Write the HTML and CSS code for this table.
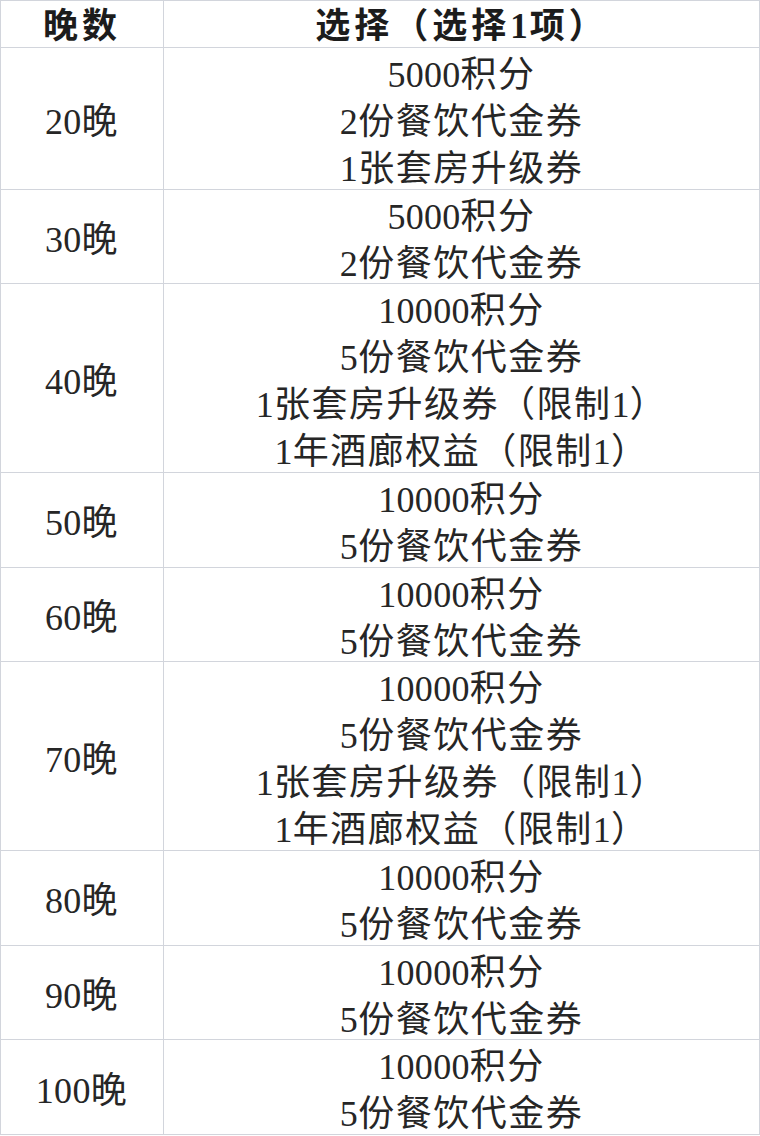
FILE: index.html
```html
<!DOCTYPE html>
<html lang="zh-CN">
<head>
<meta charset="utf-8">
<link rel="stylesheet" href="styles.css">
</head>
<body>
<table class="tbl">
  <thead>
    <tr><th class="c-night"><div class="cell">晚数</div></th><th class="c-opt"><div class="cell">选择（选择<span class="num">1</span>项）</div></th></tr>
  </thead>
  <tbody>
    <tr><td><div class="cell"><span class="num">20</span>晚</div></td><td><div class="cell"><span class="num">5000</span>积分<br><span class="num">2</span>份餐饮代金券<br><span class="num">1</span>张套房升级券</div></td></tr>
    <tr><td><div class="cell"><span class="num">30</span>晚</div></td><td><div class="cell"><span class="num">5000</span>积分<br><span class="num">2</span>份餐饮代金券</div></td></tr>
    <tr><td><div class="cell"><span class="num">40</span>晚</div></td><td><div class="cell"><span class="num">10000</span>积分<br><span class="num">5</span>份餐饮代金券<br><span class="num">1</span>张套房升级券（限制<span class="num">1</span>）<br><span class="num">1</span>年酒廊权益（限制<span class="num">1</span>）</div></td></tr>
    <tr><td><div class="cell"><span class="num">50</span>晚</div></td><td><div class="cell"><span class="num">10000</span>积分<br><span class="num">5</span>份餐饮代金券</div></td></tr>
    <tr><td><div class="cell"><span class="num">60</span>晚</div></td><td><div class="cell"><span class="num">10000</span>积分<br><span class="num">5</span>份餐饮代金券</div></td></tr>
    <tr><td><div class="cell"><span class="num">70</span>晚</div></td><td><div class="cell"><span class="num">10000</span>积分<br><span class="num">5</span>份餐饮代金券<br><span class="num">1</span>张套房升级券（限制<span class="num">1</span>）<br><span class="num">1</span>年酒廊权益（限制<span class="num">1</span>）</div></td></tr>
    <tr><td><div class="cell"><span class="num">80</span>晚</div></td><td><div class="cell"><span class="num">10000</span>积分<br><span class="num">5</span>份餐饮代金券</div></td></tr>
    <tr><td><div class="cell"><span class="num">90</span>晚</div></td><td><div class="cell"><span class="num">10000</span>积分<br><span class="num">5</span>份餐饮代金券</div></td></tr>
    <tr><td><div class="cell"><span class="num">100</span>晚</div></td><td><div class="cell"><span class="num">10000</span>积分<br><span class="num">5</span>份餐饮代金券</div></td></tr>
  </tbody>
</table>
</body>
</html>
```
FILE: styles.css
```css
html, body {
  margin: 0;
  padding: 0;
  background: #ffffff;
}
.tbl {
  width: 760px;
  border-collapse: collapse;
  font-family: "Liberation Serif", "Noto Sans CJK SC", serif;
  color: #262626;
  font-size: 36px;
  letter-spacing: 1.5px;
  table-layout: fixed;
}
.tbl th, .tbl td {
  border: 1px solid #d2d5dc;
  padding: 0;
  text-align: center;
  vertical-align: middle;
  line-height: 46.87px;
}
.cell {
  padding-top: 4px;
  margin-bottom: -4px;
}
.num {
  letter-spacing: 0.3px;
}
.tbl th {
  font-weight: 700;
  font-size: 35px;
  letter-spacing: 4px;
  height: 46px;
  line-height: 44px;
  color: #1c1c1c;
}
.tbl th .cell {
  padding-top: 3px;
  margin-bottom: -3px;
}
.tbl th .num {
  letter-spacing: 2px;
}
.c-night {
  width: 162px;
}
.c-opt {
  width: auto;
}
```
